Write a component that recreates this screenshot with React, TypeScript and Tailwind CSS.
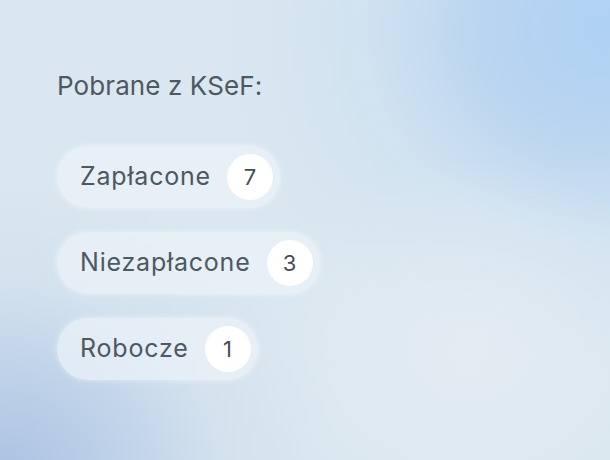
import React from "react";

const items = [
  { label: "Zapłacone", count: 7 },
  { label: "Niezapłacone", count: 3 },
  { label: "Robocze", count: 1 },
];

export default function App() {
  return (
    <div
      className="relative w-[610px] h-[460px] overflow-hidden bg-[#dae7f0]"
      style={{ fontFamily: "Inter, Roboto, 'Liberation Sans', sans-serif" }}
    >
      <div className="absolute inset-0 bg-[radial-gradient(ellipse_380px_340px_at_600px_30px,#afd1f4_0%,rgba(177,208,240,0.8)_30%,rgba(200,222,241,0.5)_62%,rgba(218,231,240,0)_100%)]" />
      <div className="absolute inset-0 bg-[radial-gradient(ellipse_340px_300px_at_0px_480px,#a9c2e2_0%,rgba(178,200,229,0.7)_35%,rgba(200,216,235,0.35)_65%,rgba(218,231,240,0)_100%)]" />
      <div className="absolute inset-0 bg-[radial-gradient(ellipse_230px_190px_at_470px_350px,rgba(228,236,243,0.95)_0%,rgba(228,236,243,0)_100%)]" />
      <div className="relative flex flex-col items-start pl-[57px] pt-[68px]">
        <div className="text-[26px] leading-[36px] text-[#4e5860] tracking-[0.1px]">
          Pobrane z KSeF:
        </div>
        <div className="mt-[42px] flex flex-col items-start gap-[24px]">
          {items.map((it) => (
            <div
              key={it.label}
              className="flex items-center h-[62px] rounded-full bg-[rgba(236,243,249,0.7)] shadow-[0_0_6px_rgba(255,255,255,0.5)] pl-[23px] pr-[7px]"
            >
              <span className="text-[25px] text-[#4e5860] tracking-[0.8px]">{it.label}</span>
              <span className="ml-[16px] flex items-center justify-center w-[46px] h-[46px] rounded-full bg-white text-[22px] text-[#454e56]">
                {it.count}
              </span>
            </div>
          ))}
        </div>
      </div>
    </div>
  );
}
